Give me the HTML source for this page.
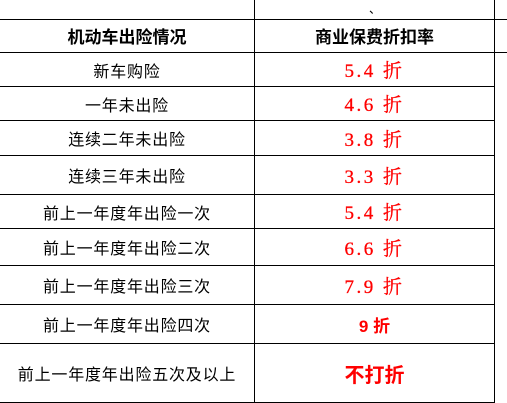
<!DOCTYPE html>
<html><head><meta charset="utf-8"><style>
body{margin:0;width:507px;height:403px;background:#fff;position:relative;overflow:hidden;font-family:"Liberation Sans","Noto Sans CJK SC",sans-serif}
.h{position:absolute;left:0;width:494px;height:1px;background:#000}
.v{position:absolute;top:0;width:1px;height:403px;background:#000}
.c{position:absolute;text-align:center;display:flex;align-items:center;justify-content:center;font-size:16px;letter-spacing:0.8px;color:#000}
.l{left:0;width:254px}
.r{left:255px;width:239px;color:#f00;font-family:"Liberation Serif","Noto Serif CJK SC",serif;font-size:19px;letter-spacing:2.5px;-webkit-text-stroke:0.3px #f00}
.b{font-weight:bold;font-size:17px;letter-spacing:0}
</style></head><body>
<div class="h" style="top:19px;width:507px"></div>
<div class="h" style="top:52px;width:507px"></div>
<div class="h" style="top:86px"></div>
<div class="h" style="top:120px"></div>
<div class="h" style="top:155px"></div>
<div class="h" style="top:194px"></div>
<div class="h" style="top:228px"></div>
<div class="h" style="top:265px"></div>
<div class="h" style="top:304px"></div>
<div class="h" style="top:343px"></div>
<div class="h" style="top:402px"></div>
<div class="v" style="left:254px"></div>
<div class="v" style="left:494px"></div>
<div style="position:absolute;left:369px;top:0;font-size:12px">、</div>
<div class="c l b" style="top:19px;height:33px">机动车出险情况</div>
<div class="c r b" style="top:19px;height:33px;color:#000;-webkit-text-stroke:0;font-family:'Liberation Sans','Noto Sans CJK SC',sans-serif;letter-spacing:0">商业保费折扣率</div>
<div class="c l" style="top:53px;height:33px">新车购险</div><div class="c r" style="top:53px;height:33px">5.4 折</div>
<div class="c l" style="top:87px;height:33px">一年未出险</div><div class="c r" style="top:87px;height:33px">4.6 折</div>
<div class="c l" style="top:121px;height:34px">连续二年未出险</div><div class="c r" style="top:121px;height:34px">3.8 折</div>
<div class="c l" style="top:156px;height:38px">连续三年未出险</div><div class="c r" style="top:156px;height:38px">3.3 折</div>
<div class="c l" style="top:195px;height:33px">前上一年度年出险一次</div><div class="c r" style="top:195px;height:33px">5.4 折</div>
<div class="c l" style="top:229px;height:36px">前上一年度年出险二次</div><div class="c r" style="top:229px;height:36px">6.6 折</div>
<div class="c l" style="top:266px;height:38px">前上一年度年出险三次</div><div class="c r" style="top:266px;height:38px">7.9 折</div>
<div class="c l" style="top:305px;height:38px">前上一年度年出险四次</div><div class="c r" style="top:305px;height:38px;font-family:'Liberation Sans','Noto Sans CJK SC',sans-serif;font-size:17px;font-weight:bold;-webkit-text-stroke:0;letter-spacing:0">9 折</div>
<div class="c l" style="top:344px;height:58px">前上一年度年出险五次及以上</div><div class="c r" style="top:344px;height:58px;font-family:'Liberation Sans','Noto Sans CJK SC',sans-serif;font-weight:bold;font-size:20px;-webkit-text-stroke:0;letter-spacing:0">不打折</div>
</body></html>
